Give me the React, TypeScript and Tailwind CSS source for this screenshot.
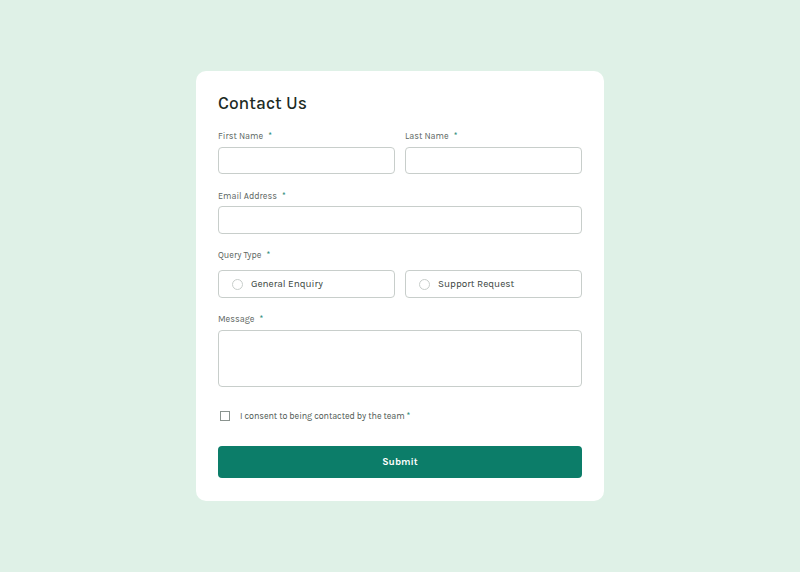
export default function App() {
  const font = { fontFamily: "Karla, 'Open Sans', 'Liberation Sans', sans-serif" };

  const Label = ({ text }: { text: string }) => (
    <label className="block pt-[1px] text-[9px] leading-[12px] text-[#5b6561]">
      {text} <span className="ml-[3px] text-[#0c7d69]">*</span>
    </label>
  );

  return (
    <div
      className="flex h-[572px] w-[800px] items-start justify-center bg-[#dff1e7] pt-[71px]"
      style={font}
    >
      <form className="w-[408px] rounded-[10px] bg-white px-[22px] pt-[22px] pb-[23px]">
        <h1 className="text-[17.5px] leading-[20px] font-medium text-[#1c2a23]">Contact Us</h1>

        <div className="mt-[16px] grid grid-cols-2 gap-x-[10px]">
          <div>
            <Label text="First Name" />
            <input className="mt-[5px] block h-[27px] w-full rounded-[4px] border border-[#c8cecb] outline-none" />
          </div>
          <div>
            <Label text="Last Name" />
            <input className="mt-[5px] block h-[27px] w-full rounded-[4px] border border-[#c8cecb] outline-none" />
          </div>
        </div>

        <div className="mt-[15px]">
          <Label text="Email Address" />
          <input className="mt-[4px] block h-[28px] w-full rounded-[4px] border border-[#c8cecb] outline-none" />
        </div>

        <div className="mt-[14px]">
          <Label text="Query Type" />
          <div className="mt-[9px] grid grid-cols-2 gap-x-[10px]">
            {["General Enquiry", "Support Request"].map((q) => (
              <div
                key={q}
                className="flex h-[28px] items-center rounded-[4px] border border-[#c8cecb] pl-[13px]"
              >
                <span className="h-[11px] w-[11px] rounded-full border border-[#c8cecb]" />
                <span className="ml-[8px] text-[10px] text-[#3a4540]">{q}</span>
              </div>
            ))}
          </div>
        </div>

        <div className="mt-[14px]">
          <Label text="Message" />
          <textarea className="mt-[5px] block h-[57px] w-full resize-none rounded-[4px] border border-[#c8cecb] outline-none" />
        </div>

        <div className="mt-[23px] flex h-[12px] items-center">
          <span className="ml-[2px] h-[10px] w-[10px] border border-[#8a938f]" />
          <span className="ml-[10px] text-[9px] leading-[12px] tracking-[-0.08px] text-[#4e5853]">
            I consent to being contacted by the team <span className="text-[#0c7d69]">*</span>
          </span>
        </div>

        <button
          type="button"
          className="mt-[24px] block h-[32px] w-full rounded-[4px] bg-[#0c7d69] text-[10px] font-bold text-white"
        >
          Submit
        </button>
      </form>
    </div>
  );
}
